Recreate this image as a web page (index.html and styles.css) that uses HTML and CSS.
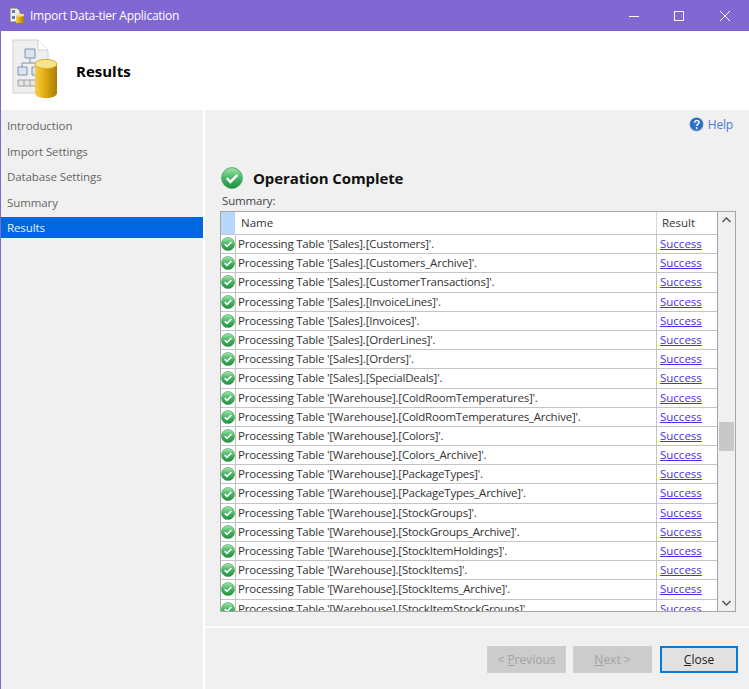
FILE: index.html
```html
<!DOCTYPE html>
<html lang="en">
<head>
  <meta charset="UTF-8" />
  <title>Import Data-tier Application</title>
  <link rel="stylesheet" href="styles.css">
</head>
<body>
  <!-- Shared icon definitions -->
  <svg class="defs" width="0" height="0">
    <defs>
      <linearGradient id="greenFill" x1="0" y1="0" x2="0" y2="1">
        <stop offset="0" stop-color="#a4e4ac" />
        <stop offset="0.5" stop-color="#45b863" />
        <stop offset="1" stop-color="#1f8f3c" />
      </linearGradient>
      <linearGradient id="goldFill" x1="0" y1="0" x2="1" y2="0">
        <stop offset="0" stop-color="#f3cf4e" />
        <stop offset="0.4" stop-color="#e6af12" />
        <stop offset="1" stop-color="#a87c08" />
      </linearGradient>
      <radialGradient id="blueFill" cx="0.5" cy="0.45" r="0.6">
        <stop offset="0" stop-color="#2f7fe0" />
        <stop offset="0.65" stop-color="#2a68c0" />
        <stop offset="1" stop-color="#aebfd8" />
      </radialGradient>
      <symbol id="check" viewBox="0 0 22 22">
        <circle cx="11" cy="11" r="10.4" fill="url(#greenFill)" stroke="#3f9a58" stroke-width="0.8" />
        <path d="M5.800 11.200l3.600 3.600 7-7" fill="none" stroke="#fff" stroke-width="2.600" />
      </symbol>
    </defs>
  </svg>

  <div class="window">
    <div class="titlebar">
      <svg class="app-icon" width="16" height="18" viewBox="0 0 16 18">
        <path d="M1 1h7l3 3v11H1z" fill="#eee" stroke="#777" />
        <path d="M3 3h3v3H3zM3 9h3v3H3z" fill="#5f7fa8" />
        <path d="M7 8h8v8H7z" fill="url(#goldFill)" />
        <ellipse cx="11" cy="8" rx="4" ry="1.500" fill="#f7e08a" />
      </svg>
      <span class="title-text">Import Data-tier Application</span>
      <div class="win-controls">
        <svg width="10" height="10" viewBox="0 0 10 10"><path d="M0 5.500h10" stroke="#fff" /></svg>
        <svg class="win-max" width="10" height="10" viewBox="0 0 10 10"><path d="M.5.500h9v9h-9z" fill="none" stroke="#fff" /></svg>
        <svg width="10" height="10" viewBox="0 0 10 10"><path d="M0 0l10 10M10 0L0 10" stroke="#fff" /></svg>
      </div>
    </div>

    <div class="banner">
      <svg class="banner-icon" width="48" height="62" viewBox="0 0 48 62">
        <path d="M1 1h25l10 10v43H1z" fill="#efefef" stroke="#cfcfcf" />
        <path d="M26 1v10h10" fill="#fff" stroke="#cfcfcf" />
        <path d="M13 10h10v9H13zM6 28h9v8H6zM20 28h9v8H20z" fill="#dbe5f2" stroke="#8094ae" />
        <path d="M18 19v5M10 28v-4h14v4" fill="none" stroke="#8094ae" />
        <path d="M6 41h25v6H6z" fill="#e6e6e6" stroke="#a0a0a0" />
        <path d="M12 41v6M18 41v6M24 41v6" stroke="#a0a0a0" />
        <path d="M23 25v29c0 3 5 5 11 5s11-2 11-5V25z" fill="url(#goldFill)" />
        <ellipse cx="34" cy="25" rx="11" ry="4.600" fill="#f6e48e" stroke="#dcae20" />
      </svg>
      <h1 class="banner-title">Results</h1>
    </div>

    <div class="content">
      <nav class="sidebar">
        <a class="nav-item">Introduction</a>
        <a class="nav-item">Import Settings</a>
        <a class="nav-item">Database Settings</a>
        <a class="nav-item">Summary</a>
        <a class="nav-item active">Results</a>
      </nav>

      <main class="main">
        <div class="pane">
          <div class="help-row">
            <svg width="15" height="15" viewBox="0 0 15 15">
              <circle cx="7.500" cy="7.500" r="7" fill="url(#blueFill)" />
              <path d="M5.400 5.600c.3-1.400 1.300-2 2.400-2 1.300 0 2.200.8 2.200 1.900 0 1.700-2.200 1.600-2.300 3.500" fill="none" stroke="#fff" stroke-width="1.500" />
              <circle cx="7.600" cy="11" r="0.900" fill="#fff" />
            </svg>
            <span class="help-link">Help</span>
          </div>

          <div class="status-row">
            <svg class="status-icon" width="22" height="22"><use href="#check" /></svg>
            <h2 class="status-text">Operation Complete</h2>
          </div>
          <div class="summary-label">Summary:</div>

          <div class="grid-box">
            <div class="grid-body">
              <div class="grid-head">
                <div class="cell-swatch"></div>
                <div class="head-name">Name</div>
                <div class="head-result">Result</div>
              </div>
              <div class="rows">
                <div class="row"><svg class="row-icon"><use href="#check" /></svg><span class="row-name">Processing Table '[Sales].[Customers]'.</span><a class="row-result">Success</a></div>
                <div class="row"><svg class="row-icon"><use href="#check" /></svg><span class="row-name">Processing Table '[Sales].[Customers_Archive]'.</span><a class="row-result">Success</a></div>
                <div class="row"><svg class="row-icon"><use href="#check" /></svg><span class="row-name">Processing Table '[Sales].[CustomerTransactions]'.</span><a class="row-result">Success</a></div>
                <div class="row"><svg class="row-icon"><use href="#check" /></svg><span class="row-name">Processing Table '[Sales].[InvoiceLines]'.</span><a class="row-result">Success</a></div>
                <div class="row"><svg class="row-icon"><use href="#check" /></svg><span class="row-name">Processing Table '[Sales].[Invoices]'.</span><a class="row-result">Success</a></div>
                <div class="row"><svg class="row-icon"><use href="#check" /></svg><span class="row-name">Processing Table '[Sales].[OrderLines]'.</span><a class="row-result">Success</a></div>
                <div class="row"><svg class="row-icon"><use href="#check" /></svg><span class="row-name">Processing Table '[Sales].[Orders]'.</span><a class="row-result">Success</a></div>
                <div class="row"><svg class="row-icon"><use href="#check" /></svg><span class="row-name">Processing Table '[Sales].[SpecialDeals]'.</span><a class="row-result">Success</a></div>
                <div class="row"><svg class="row-icon"><use href="#check" /></svg><span class="row-name">Processing Table '[Warehouse].[ColdRoomTemperatures]'.</span><a class="row-result">Success</a></div>
                <div class="row"><svg class="row-icon"><use href="#check" /></svg><span class="row-name">Processing Table '[Warehouse].[ColdRoomTemperatures_Archive]'.</span><a class="row-result">Success</a></div>
                <div class="row"><svg class="row-icon"><use href="#check" /></svg><span class="row-name">Processing Table '[Warehouse].[Colors]'.</span><a class="row-result">Success</a></div>
                <div class="row"><svg class="row-icon"><use href="#check" /></svg><span class="row-name">Processing Table '[Warehouse].[Colors_Archive]'.</span><a class="row-result">Success</a></div>
                <div class="row"><svg class="row-icon"><use href="#check" /></svg><span class="row-name">Processing Table '[Warehouse].[PackageTypes]'.</span><a class="row-result">Success</a></div>
                <div class="row"><svg class="row-icon"><use href="#check" /></svg><span class="row-name">Processing Table '[Warehouse].[PackageTypes_Archive]'.</span><a class="row-result">Success</a></div>
                <div class="row"><svg class="row-icon"><use href="#check" /></svg><span class="row-name">Processing Table '[Warehouse].[StockGroups]'.</span><a class="row-result">Success</a></div>
                <div class="row"><svg class="row-icon"><use href="#check" /></svg><span class="row-name">Processing Table '[Warehouse].[StockGroups_Archive]'.</span><a class="row-result">Success</a></div>
                <div class="row"><svg class="row-icon"><use href="#check" /></svg><span class="row-name">Processing Table '[Warehouse].[StockItemHoldings]'.</span><a class="row-result">Success</a></div>
                <div class="row"><svg class="row-icon"><use href="#check" /></svg><span class="row-name">Processing Table '[Warehouse].[StockItems]'.</span><a class="row-result">Success</a></div>
                <div class="row"><svg class="row-icon"><use href="#check" /></svg><span class="row-name">Processing Table '[Warehouse].[StockItems_Archive]'.</span><a class="row-result">Success</a></div>
                <div class="row"><svg class="row-icon"><use href="#check" /></svg><span class="row-name">Processing Table '[Warehouse].[StockItemStockGroups]'.</span><a class="row-result">Success</a></div>
              </div>
            </div>
            <div class="scrollbar">
              <svg class="scroll-arrow" width="17" height="17" viewBox="0 0 17 17"><path d="M4.500 10l4-4 4 4" fill="none" stroke="#555" stroke-width="1.500" /></svg>
              <div class="scroll-track"><div class="scroll-thumb"></div></div>
              <svg class="scroll-arrow" width="17" height="17" viewBox="0 0 17 17"><path d="M4.500 7l4 4 4-4" fill="none" stroke="#555" stroke-width="1.500" /></svg>
            </div>
          </div>
        </div>

        <div class="footer">
          <button class="btn" disabled>&lt; <u>P</u>revious</button>
          <button class="btn" disabled><u>N</u>ext &gt;</button>
          <button class="btn btn-default"><u>C</u>lose</button>
        </div>
      </main>
    </div>
  </div>
</body>
</html>
```

FILE: styles.css
```css
/* Global Styles */
html, body {
  margin: 0;
  padding: 0;
}

body {
  width: 749px;
  height: 689px;
  overflow: hidden;
  font-family: "Open Sans", "Noto Sans", sans-serif;
  font-size: 11.5px;
  color: #333;
}

.defs {
  display: block;
  height: 0;
}

.window {
  height: 689px;
  display: flex;
  flex-direction: column;
  box-sizing: border-box;
  border-left: 1px solid #8067d3;
  background-color: #fff;
}

/* Title bar */
.titlebar {
  height: 31px;
  margin-left: -1px;
  display: flex;
  align-items: center;
  background-color: #8067d3;
  color: #fff;
  padding-left: 9px;
  flex-shrink: 0;
}

.app-icon {
  margin-right: 5px;
}

.title-text {
  font-size: 12px;
  letter-spacing: -0.25px;
}

.win-controls {
  margin-left: auto;
  display: flex;
  gap: 35px;
  padding-right: 19px;
}

.win-max {
  margin-right: 1px;
}

/* White banner */
.banner {
  height: 79px;
  display: flex;
  align-items: center;
  flex-shrink: 0;
}

.banner-icon {
  margin-left: 11px;
  margin-top: -1px;
}

.banner-title {
  margin: 0 0 0 16px;
  font-size: 15px;
  font-weight: 700;
  color: #000;
}

/* Body */
.content {
  flex: 1;
  display: flex;
  gap: 2px;
  min-height: 0;
}

.sidebar {
  width: 202px;
  background-color: #f0f0f0;
  padding-top: 5px;
  flex-shrink: 0;
}

.nav-item {
  display: block;
  height: 21px;
  line-height: 21px;
  margin-bottom: 4.600px;
  padding-left: 6px;
  color: #666;
  letter-spacing: -0.1px;
}

.nav-item.active {
  background-color: #0068de;
  color: #e8f1ff;
}

.main {
  flex: 1;
  display: flex;
  flex-direction: column;
  background-color: #f0f0f0;
}

.pane {
  height: 518px;
  padding: 0 14px 0 15px;
  box-sizing: border-box;
  border-bottom: 2px solid #fbfbfb;
  flex-shrink: 0;
}

.help-row {
  height: 27px;
  display: flex;
  align-items: center;
  justify-content: flex-end;
  gap: 4px;
  padding-top: 1px;
  padding-right: 3px;
  box-sizing: border-box;
}

.help-link {
  color: #4a7ccc;
  font-size: 12px;
  letter-spacing: -0.2px;
}

.status-row {
  margin-top: 29px;
  height: 24px;
  display: flex;
  align-items: center;
  gap: 10px;
}

.status-icon {
  margin-left: 1px;
}

.status-text {
  margin: 0;
  font-size: 15px;
  font-weight: 700;
  color: #111;
  letter-spacing: -0.1px;
}

.summary-label {
  height: 19px;
  line-height: 18px;
  margin-top: 2px;
  margin-left: 2px;
  color: #444;
  letter-spacing: -0.15px;
}

/* Results grid */
.grid-box {
  height: 401px;
  display: flex;
  box-sizing: border-box;
  border: 1px solid #a6a6a6;
  background-color: #f0f0f0;
}

.grid-body {
  width: 496px;
  background-color: #fff;
  border-right: 1px solid #a6a6a6;
  overflow: hidden;
}

.grid-head {
  height: 23px;
  display: flex;
  align-items: center;
  border-bottom: 1px solid #c4c4c4;
  box-sizing: border-box;
  color: #333;
}

.cell-swatch {
  width: 14px;
  height: 100%;
  background-color: #b5d8f8;
}

.head-name {
  width: 421px;
  padding-left: 6px;
  box-sizing: border-box;
  height: 100%;
  line-height: 22px;
}

.head-result {
  flex: 1;
  height: 100%;
  line-height: 22px;
  padding-left: 5px;
  border-left: 1px solid #d8d8d8;
}

.row {
  height: 19.2px;
  box-sizing: border-box;
  display: flex;
  align-items: center;
  border-bottom: 1px solid #c4c4c4;
  white-space: nowrap;
}

.row-icon {
  width: 14px;
  height: 14px;
  flex-shrink: 0;
}

.row-name {
  width: 421px;
  height: 100%;
  box-sizing: border-box;
  padding-left: 2px;
  border-left: 1px solid #c4c4c4;
  line-height: 18px;
  color: #333;
  letter-spacing: -0.22px;
  flex-shrink: 0;
}

.row-result {
  flex: 1;
  height: 100%;
  padding-left: 3px;
  line-height: 18px;
  border-left: 1px solid #c4c4c4;
  color: #4a2cf0;
  text-decoration: underline;
}

/* Scrollbar */
.scrollbar {
  flex: 1;
  display: flex;
  flex-direction: column;
}

.scroll-arrow {
  flex-shrink: 0;
}

.scroll-track {
  flex: 1;
  padding-top: 193px;
}

.scroll-thumb {
  height: 29px;
  margin: 0 1px;
  background-color: #c8c8c8;
}

/* Footer buttons */
.footer {
  flex: 1;
  display: flex;
  justify-content: flex-end;
  align-items: flex-start;
  gap: 7px;
  padding-top: 18px;
  padding-right: 12px;
}

.btn {
  width: 79px;
  height: 27px;
  padding: 0;
  border: 1px solid #cfcfcf;
  background-color: #cccccc;
  color: #a3a3a3;
  font-family: inherit;
  font-size: 12px;
}

.btn-default {
  width: 78px;
  margin-left: 1px;
  border: 2px solid #0a7ad9;
  background-color: #e1e1e1;
  color: #222;
}
```
